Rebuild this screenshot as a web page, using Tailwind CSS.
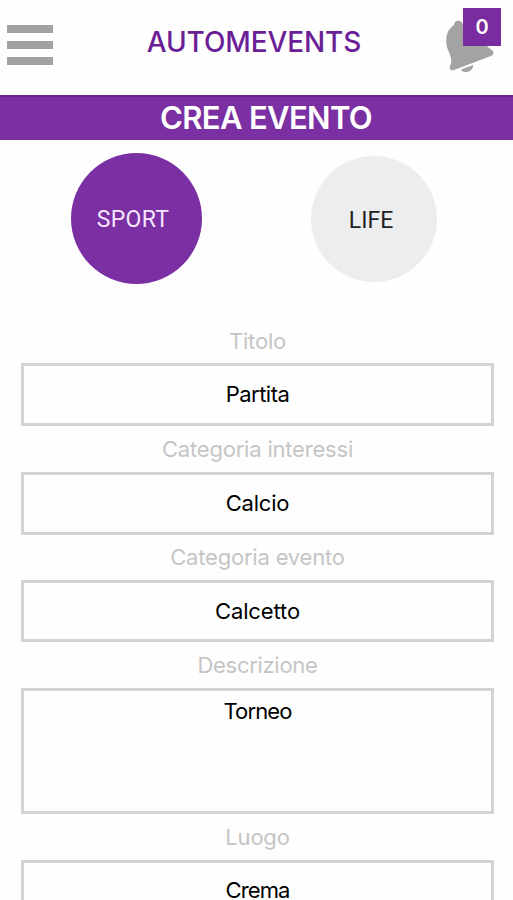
<!DOCTYPE html>
<html lang="it">
<head>
<meta charset="utf-8">
<title>Automevents</title>
<script src="https://cdn.jsdelivr.net/npm/@tailwindcss/browser@4"></script>
</head>
<body class="bg-white">
<div class="w-[513px] h-[900px] overflow-hidden bg-[#fefefe] font-['Inter',sans-serif] flex flex-col">
  <header class="h-[95px] shrink-0 flex justify-between">
    <button class="mt-[25px] ml-[7px] w-[46px] h-10 flex flex-col justify-between" aria-label="Menu">
      <span class="block w-full h-2 bg-[#a2a2a2]"></span>
      <span class="block w-full h-2 bg-[#a2a2a2]"></span>
      <span class="block w-full h-2 bg-[#a2a2a2]"></span>
    </button>
    <h1 class="mt-[22px] ml-[10px] h-10 leading-10 text-[28px] font-medium text-[#6b1f96] tracking-[-0.1px] whitespace-nowrap"><span>AUTOMEVENTS</span></h1>
    <div class="relative w-[68px]">
      <svg class="absolute left-0 top-[18px]" width="54" height="58" viewBox="445 18 54 58" fill="#a3a3a3">
        <path d="M454 25C454 20 462 19 463 25C474 23 482 30 484 40C486 47 491 49 493 51C494 54 493 55 491 56L454 70C451 71 449 69 450 66C453 60 450 55 448 50C444 40 447 29 454 25Z"/>
        <path d="M461 69.500L473 65C474 71 464 75 461 69.500Z"/>
      </svg>
      <span class="absolute left-[18px] top-2 w-[38px] h-[38px] bg-[#792ba0] text-white text-[20px] leading-[39px] font-semibold text-center">0</span>
    </div>
  </header>
  <div class="h-[45px] shrink-0 bg-[#7a30a2] border-t-2 border-[#69208f] text-white text-[31px] leading-[42px] font-semibold tracking-[-0.65px] text-center pl-[19px] whitespace-nowrap"><span>CREA EVENTO</span></div>
  <div class="h-[184px] shrink-0 flex pt-[13px] pl-[71px] font-['Roboto',sans-serif] text-[23px]">
    <button class="w-[131px] h-[131px] rounded-full bg-[#7a30a2] text-[#f7e4ff] pr-[7px] pt-1 tracking-[0.3px]"><span>SPORT</span></button>
    <button class="mt-[3px] ml-[109px] w-[126px] h-[126px] rounded-full bg-[#ebedef] text-[#222] pr-[6px] pt-1"><span>LIFE</span></button>
  </div>
  <main class="pl-[21px] pr-[19px] text-center text-[22px] text-black tracking-[-0.5px] whitespace-nowrap">
    <div class="h-[39px] leading-[34px] tracking-[-0.2px] text-[#c5c5c5]"><span>Titolo</span></div>
    <div class="h-[63px] border-[3px] border-[#d3d3d3] leading-[57px]"><span>Partita</span></div>
    <div class="h-[45.5px] leading-[46px] tracking-[-0.2px] text-[#c5c5c5]"><span>Categoria interessi</span></div>
    <div class="h-[63px] border-[3px] border-[#d3d3d3] leading-[57px] tracking-[-0.2px]"><span>Calcio</span></div>
    <div class="h-[45.5px] leading-[45px] tracking-[-0.2px] text-[#c5c5c5]"><span>Categoria evento</span></div>
    <div class="h-[62px] border-[3px] border-[#d3d3d3] leading-[57px] tracking-[-0.1px]"><span>Calcetto</span></div>
    <div class="h-[46px] leading-[46px] tracking-[-0.3px] text-[#c5c5c5]"><span>Descrizione</span></div>
    <div class="h-[126px] border-[3px] border-[#d3d3d3] leading-[40px] tracking-[-0.9px]"><span>Torneo</span></div>
    <div class="h-[46px] leading-[46px] tracking-[-0.2px] text-[#c5c5c5]"><span>Luogo</span></div>
    <div class="h-[63px] border-[3px] border-[#d3d3d3] leading-[55px] tracking-[-0.9px]"><span>Crema</span></div>
  </main>
</div>
</body>
</html>
